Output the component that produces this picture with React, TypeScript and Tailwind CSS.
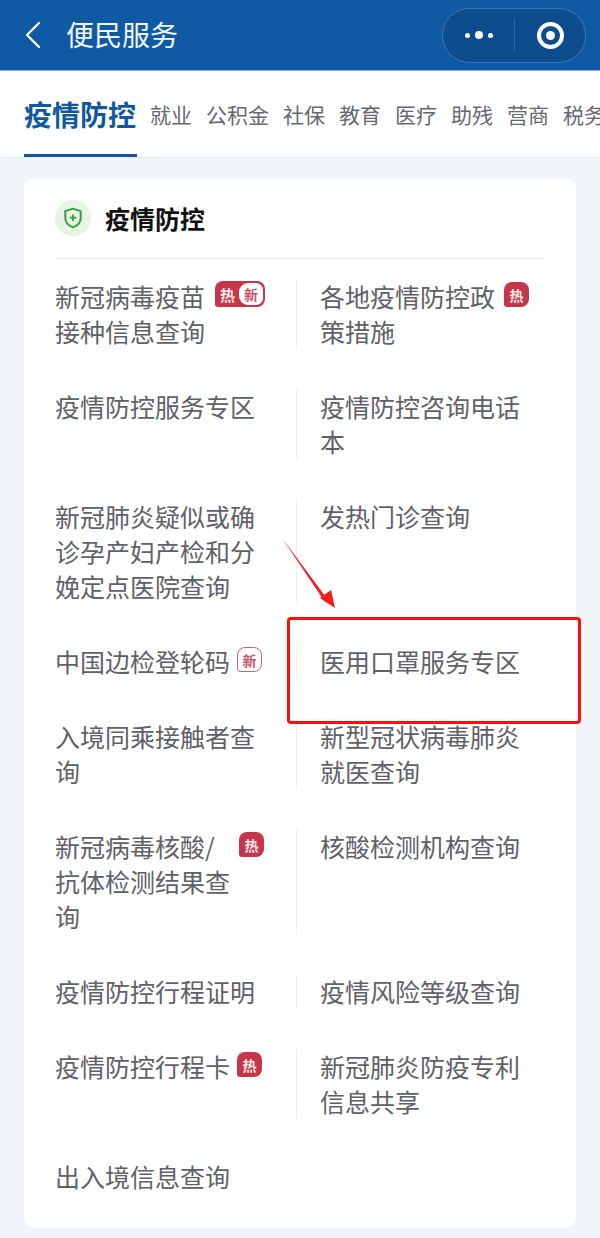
import * as React from 'react'

const FONT = "font-['Noto_Sans_CJK_SC','Noto_Sans',sans-serif]"

const tabs = [
  { label: '就业', width: 'w-[42px]' },
  { label: '公积金', width: 'w-[63px]' },
  { label: '社保', width: 'w-[42px]' },
  { label: '教育', width: 'w-[42px]' },
  { label: '医疗', width: 'w-[42px]' },
  { label: '助残', width: 'w-[42px]' },
  { label: '营商', width: 'w-[42px]' },
  { label: '税务', width: 'w-[42px]' },
]

type Badge = 'hot' | 'new' | 'both'

interface Item {
  left: string
  leftBadge?: Badge
  right: string
  rightBadge?: Badge
  leftWidth?: string
  rightWidth?: string
}

const rows: Item[] = [
  { left: '新冠病毒疫苗接种信息查询', leftBadge: 'both', leftWidth: 'w-[150px]', right: '各地疫情防控政策措施', rightBadge: 'hot', rightWidth: 'w-[175px]' },
  { left: '疫情防控服务专区', right: '疫情防控咨询电话本', rightWidth: 'w-[201px]' },
  { left: '新冠肺炎疑似或确诊孕产妇产检和分娩定点医院查询', leftWidth: 'w-[201px]', right: '发热门诊查询' },
  { left: '中国边检登轮码', leftBadge: 'new', leftWidth: 'w-[175px]', right: '医用口罩服务专区' },
  { left: '入境同乘接触者查询', leftWidth: 'w-[201px]', right: '新型冠状病毒肺炎就医查询', rightWidth: 'w-[201px]' },
  { left: '新冠病毒核酸/抗体检测结果查询', leftBadge: 'hot', leftWidth: 'w-[177px]', right: '核酸检测机构查询' },
  { left: '疫情防控行程证明', right: '疫情风险等级查询' },
  { left: '疫情防控行程卡', leftBadge: 'hot', leftWidth: 'w-[175px]', right: '新冠肺炎防疫专利信息共享', rightWidth: 'w-[201px]' },
]

function Tag({ type }: { type: Badge }) {
  if (type === 'hot') {
    return (
      <span className="flex h-[25px] w-[25px] shrink-0 items-center justify-center rounded-t-[8px] rounded-br-[8px] rounded-bl-[3px] bg-[#c5364c] text-[14px] font-bold leading-none text-[#fbe9ea]">
        热
      </span>
    )
  }
  if (type === 'new') {
    return (
      <span className="flex h-[25px] w-[25px] shrink-0 items-center justify-center rounded-t-[8px] rounded-br-[8px] rounded-bl-[3px] border-[1.5px] border-[#c4687a] bg-white text-[14px] font-bold leading-none text-[#c5566a]">
        新
      </span>
    )
  }
  return (
    <span className="flex h-[26px] w-[50px] shrink-0 items-center rounded-t-[8px] rounded-br-[8px] rounded-bl-[3px] bg-[#c5364c] pl-[5px] pr-[2px] text-[15px] font-bold leading-none">
      <span className="w-[19px] text-[#fbe9ea]">热</span>
      <span className="flex h-[22px] w-[24px] items-center justify-center rounded-l-[9px] rounded-r-[7px] bg-white text-[14px] text-[#c5566a]">新</span>
    </span>
  )
}

function Cell({ text, badge, width, divider }: { text: string; badge?: Badge; width?: string; divider?: boolean }) {
  return (
    <div className={divider ? 'flex items-start gap-[9px] border-l border-[#eef0f2] pl-[23px]' : 'flex items-start gap-[7px]'}>
      <span className={`${width ?? ''} shrink-0 text-[25px] leading-[35px] text-[#5f6167]`}>{text}</span>
      {badge && (
        <span className={badge === 'both' ? 'ml-[3px] mt-[2px]' : 'mt-[3px]'}>
          <Tag type={badge} />
        </span>
      )}
    </div>
  )
}

export default function App() {
  return (
    <div className={`relative h-[1238px] w-[600px] overflow-hidden bg-[#f1f4f8] ${FONT}`}>
      <header className="flex h-[71px] items-center border-b border-[#8fb4da] bg-[#1059a3] pl-[22px] pr-[14px]">
        <svg width="22" height="30" viewBox="0 0 22 30" fill="none" className="shrink-0">
          <path d="M17 3 L5 15 L17 27" stroke="#fff" strokeWidth="2.2" strokeLinecap="round" strokeLinejoin="round" />
        </svg>
        <h1 className="mb-[2px] ml-[22px] text-[28px] leading-none text-[#f2f6fb]">便民服务</h1>
        <div className="ml-auto flex h-[55px] w-[144px] items-center rounded-full border border-[#3a78b4] bg-[#0d4c8d]">
          <div className="flex w-[71px] items-center justify-center gap-[5px]">
            <span className="h-[5px] w-[5px] rounded-full bg-white" />
            <span className="h-[8px] w-[8px] rounded-full bg-white" />
            <span className="h-[5px] w-[5px] rounded-full bg-white" />
          </div>
          <div className="h-[32px] w-px bg-[#2a6aa8]" />
          <div className="flex flex-1 items-center justify-center">
            <span className="flex h-[27px] w-[27px] items-center justify-center rounded-full border-[4px] border-white">
              <span className="h-[9px] w-[9px] rounded-full bg-white" />
            </span>
          </div>
        </div>
      </header>

      <nav className="flex h-[87px] items-center gap-[14px] overflow-hidden border-b border-[#e9ecef] bg-white pl-[24px]">
        <div className="relative flex h-full w-[112px] shrink-0 items-center">
          <span className="whitespace-nowrap text-[28px] font-bold leading-none text-[#10589f]">疫情防控</span>
          <span className="absolute bottom-[-1px] left-0 h-[4px] w-[113px] bg-[#10589f]" />
        </div>
        {tabs.map((tab) => (
          <span key={tab.label} className={`${tab.width} shrink-0 whitespace-nowrap text-[21px] leading-none text-[#66686e]`}>
            {tab.label}
          </span>
        ))}
      </nav>

      <main className="mx-[24px] mt-[20px] h-[1050px] rounded-[10px] bg-white pl-[31px] pr-[32px]">
        <div className="flex h-[81px] items-center border-b border-[#e8e9eb]">
          <span className="flex h-[36px] w-[36px] items-center justify-center rounded-full bg-[#e7f3e3]">
            <svg width="20" height="22" viewBox="0 0 18 20" fill="none">
              <path d="M9 1.5 L16 3.8 V10 C16 14 13 17 9 18.5 C5 17 2 14 2 10 V3.8 Z" stroke="#2fa43c" strokeWidth="1.8" strokeLinejoin="round" />
              <path d="M9 7.4 V12 M6.7 9.7 H11.3" stroke="#2fa43c" strokeWidth="1.7" strokeLinecap="round" />
            </svg>
          </span>
          <h2 className="ml-[14px] text-[25px] font-bold leading-none text-[#111]">疫情防控</h2>
        </div>

        <div className="mt-[20px] grid grid-cols-[241px_1fr] gap-y-[40px]">
          {rows.map((row) => (
            <React.Fragment key={row.left}>
              <Cell text={row.left} badge={row.leftBadge} width={row.leftWidth} />
              <Cell text={row.right} badge={row.rightBadge} width={row.rightWidth} divider />
            </React.Fragment>
          ))}
          <Cell text="出入境信息查询" />
        </div>
      </main>

      {/* red annotation drawn over the screenshot */}
      <div className="absolute left-[287px] top-[617px] h-[107px] w-[294px] rounded-[4px] border-[3px] border-[#fb0f0f]" />
      <svg className="absolute left-[278px] top-[534px]" width="62" height="78" viewBox="0 0 62 78" fill="none">
        <path d="M4 4 L50 66 L47 68 Z" fill="#fb1a1a" />
        <path d="M57 74 L42 64 L53 56 Z" fill="#fb1a1a" />
      </svg>
    </div>
  )
}
